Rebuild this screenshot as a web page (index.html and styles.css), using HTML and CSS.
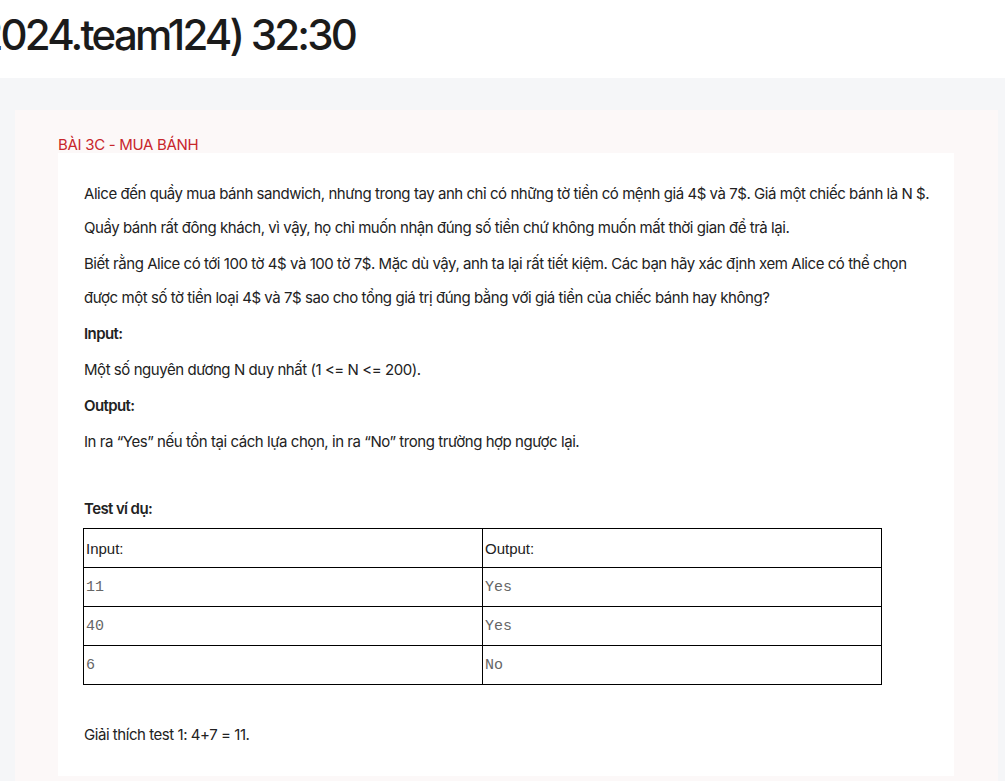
FILE: index.html
```html
<!DOCTYPE html>
<html lang="vi">
<head>
<meta charset="utf-8">
<link rel="stylesheet" href="styles.css">
</head>
<body>
<header class="top">
  <h1 class="contest-title">(hsg2024.team124) 32:30</h1>
</header>
<main class="page">
  <section class="card">
    <h2 class="problem-title">BÀI 3C - MUA BÁNH</h2>
    <div class="statement">
      <p>Alice đến quầy mua bánh sandwich, nhưng trong tay anh chỉ có những tờ tiền có mệnh giá 4$ và 7$. Giá một chiếc bánh là N $. Quầy bánh rất đông khách, vì vậy, họ chỉ muốn nhận đúng số tiền chứ không muốn mất thời gian để trả lại.</p>
      <p>Biết rằng Alice có tới 100 tờ 4$ và 100 tờ 7$. Mặc dù vậy, anh ta lại rất tiết kiệm. Các bạn hãy xác định xem Alice có thể chọn được một số tờ tiền loại 4$ và 7$ sao cho tổng giá trị đúng bằng với giá tiền của chiếc bánh hay không?</p>
      <p class="label">Input:</p>
      <p>Một số nguyên dương N duy nhất (1 &lt;= N &lt;= 200).</p>
      <p class="label">Output:</p>
      <p>In ra “Yes” nếu tồn tại cách lựa chọn, in ra “No” trong trường hợp ngược lại.</p>
      <p class="label test-label">Test ví dụ:</p>
      <table class="tests">
        <tr><td class="head">Input:</td><td class="head">Output:</td></tr>
        <tr><td>11</td><td>Yes</td></tr>
        <tr><td>40</td><td>Yes</td></tr>
        <tr><td>6</td><td>No</td></tr>
      </table>
      <p class="note">Giải thích test 1: 4+7 = 11.</p>
    </div>
  </section>
</main>
</body>
</html>
```

FILE: styles.css
```css
html, body {
  margin: 0;
  padding: 0;
  background: #ffffff;
  font-family: Inter, "Noto Sans", sans-serif;
  color: #1e1e1e;
}

.top {
  height: 78px;
  overflow: hidden;
  background: #ffffff;
}

.contest-title {
  margin: 0;
  margin-left: -101px;
  padding-top: 9px;
  font-size: 42px;
  line-height: 52px;
  font-weight: 500;
  letter-spacing: -2.8px;
  color: #1b1b1b;
  white-space: nowrap;
}

.page {
  background: #f5f6f8;
  padding: 32px 7px 0 15px;
  height: 671px;
  overflow: hidden;
}

.card {
  background: #fcf8f8;
  padding: 26px 44px 20px 43px;
  height: 700px;
}

.problem-title {
  margin: 0;
  font-size: 15px;
  line-height: 17px;
  font-weight: 400;
  letter-spacing: -0.3px;
  color: #c8262c;
}

.statement {
  background: #ffffff;
  padding: 24px 24px 22px 26px;
  font-size: 15px;
  color: #222222;
}

.statement p {
  margin: 0 0 2px 0;
  line-height: 34px;
  letter-spacing: -0.45px;
}

.statement .label {
  font-weight: 600;
  letter-spacing: -0.6px;
}

.statement .test-label {
  margin-top: 33px;
  margin-bottom: 2px;
}

.tests {
  border-collapse: collapse;
  width: 799px;
  margin-left: -1px;
}

.tests td {
  border: 1px solid #000000;
  width: 50%;
  height: 38px;
  padding: 0 2px;
  font-family: "Liberation Mono", monospace;
  font-size: 15px;
  color: #666666;
  vertical-align: middle;
}

.tests td.head {
  font-family: "Liberation Sans", Arial, sans-serif;
  font-size: 15px;
  color: #222222;
}

.statement .note {
  margin-top: 33px;
}
```
